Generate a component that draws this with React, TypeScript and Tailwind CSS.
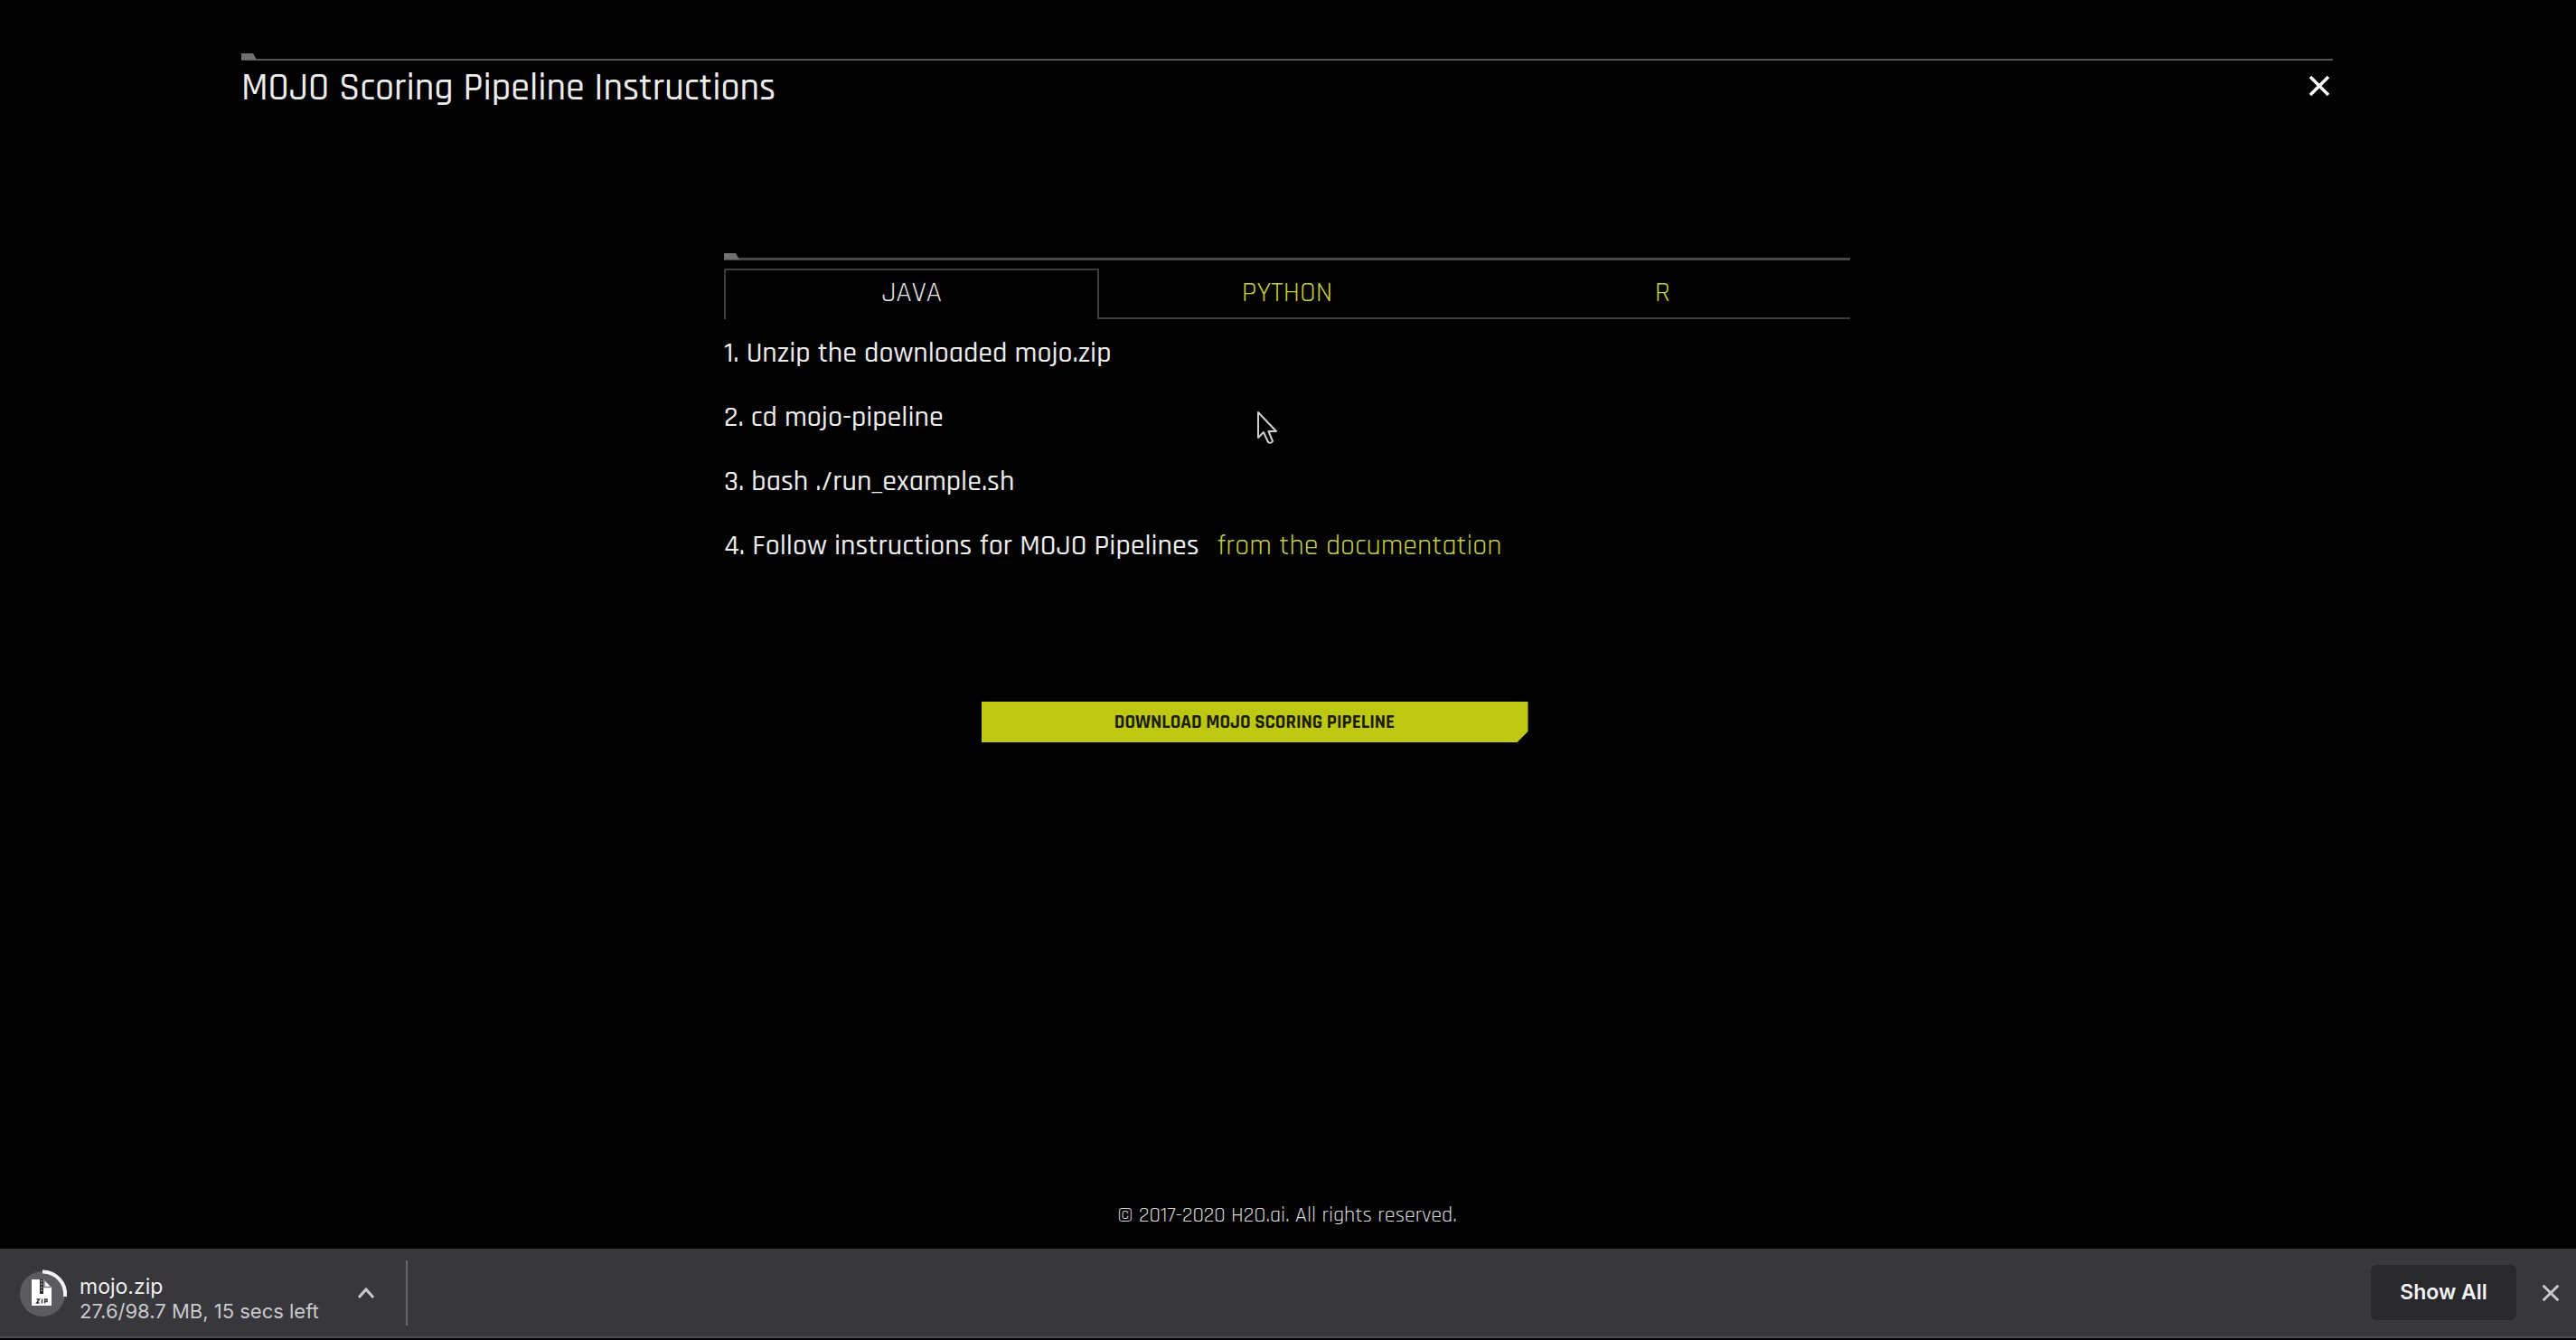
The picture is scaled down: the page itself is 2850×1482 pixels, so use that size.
import { useState } from "react";

const tabs = ["JAVA", "PYTHON", "R"];

const steps = [
  "1. Unzip the downloaded mojo.zip",
  "2. cd mojo-pipeline",
  "3. bash ./run_example.sh",
];

function Notch() {
  return (
    <svg viewBox="0 0 17 7" className="block h-[7px] w-[17px]" fill="#707072" aria-hidden="true">
      <path d="M0 0h13l4 7H0z" />
    </svg>
  );
}

function Cross({ className }: { className: string }) {
  return (
    <svg viewBox="0 0 24 24" className={className} fill="none" stroke="currentColor" strokeWidth="3.500" aria-hidden="true">
      <path d="M2 2l20 20M22 2L2 22" />
    </svg>
  );
}

function ZipProgress() {
  return (
    <svg viewBox="0 0 54 54" className="size-[54px] shrink-0" aria-hidden="true">
      <circle cx="25" cy="28" r="25" fill="#5c5b60" />
      <path d="M25 3.500A25 25 0 0 1 50 31" fill="none" stroke="#f4f4f6" strokeWidth="4" />
      <path d="M13 12h13l9 9v20H13z" fill="#fff" />
      <path d="M27 13v7.500h7" fill="none" stroke="#77767b" strokeWidth="1.500" />
      <path d="M22 12h4v16h-4z" fill="#2b2a2e" />
      <path d="M24 13v12" stroke="#bbb" strokeWidth="1.500" strokeDasharray="1.500 2" />
      <path d="M18.500 34h3l-3 4h3M24.500 33.500v5M27.500 38.500v-4.500h2.500v2.500h-2.500" fill="none" stroke="#333" strokeWidth="1.300" />
    </svg>
  );
}

function Pointer() {
  return (
    <svg viewBox="0 0 24 38" className="h-[38px] w-6" fill="#000" stroke="#cfcfcf" strokeWidth="2" strokeLinejoin="round" aria-hidden="true">
      <path d="M2 2v28l6-6 5 11q3 2 5-1l-4.500-11H22z" />
    </svg>
  );
}

export default function App() {
  const [active, setActive] = useState("JAVA");
  return (
    <div className="flex min-h-screen flex-col bg-black font-['Rajdhani','Roboto',sans-serif] text-[#ededed]">
      <main className="flex flex-1 flex-col pr-[269px] pl-[267px] pt-[59px]">
        <header>
          <Notch />
          <div className="-mt-px h-0.5 bg-[#565657]" />
          <div className="flex items-start justify-between pt-1">
            <h1 className="text-[42px] leading-[54px] font-medium">MOJO Scoring Pipeline Instructions</h1>
            <button type="button" aria-label="Close" className="mt-3 mr-[3px] text-white">
              <Cross className="size-6" />
            </button>
          </div>
        </header>

        <section className="relative mx-auto mt-[155px] w-full max-w-[1246px]">
          <Notch />
          <div className="-mt-0.5 h-[3px] bg-[#474748]" />
          <div role="tablist" className="mt-[9px] grid grid-cols-3">
            {tabs.map((tab) => (
              <button
                key={tab}
                type="button"
                role="tab"
                aria-selected={tab === active}
                onClick={() => setActive(tab)}
                className={
                  tab === active
                    ? "h-14 border-2 border-b-0 border-[#3d3d3f] pb-1 text-[32px] leading-[50px] text-[#e4e4e4]"
                    : "h-14 border-b-2 border-[#3d3d3f] pt-0.5 pb-1 text-[32px] leading-[50px] text-[#c3cd3c]"
                }
              >
                {tab}
              </button>
            ))}
          </div>
          <ol className="mt-0.5 text-[32px] leading-[71px] font-medium">
            {steps.map((step) => (
              <li key={step}>{step}</li>
            ))}
            <li>
              4. Follow instructions for MOJO Pipelines
              <a href="#documentation" className="ml-5 font-normal text-[#c3cd3c]">from the documentation</a>
            </li>
          </ol>
          <div className="absolute top-[174px] left-[589px]">
            <Pointer />
          </div>
        </section>

        <button
          type="button"
          className="mt-[137px] mr-[72px] h-[45px] w-[605px] self-center bg-[#bec813] text-[21px] leading-[45px] font-bold text-[#1c1d0e] [clip-path:polygon(0_0,100%_0,100%_calc(100%-12px),calc(100%-12px)_100%,0_100%)]"
        >
          DOWNLOAD MOJO SCORING PIPELINE
        </button>

        <footer className="mt-auto pb-[21px] text-center text-2xl text-[#d6d6d6]">
          © 2017-2020 H2O.ai. All rights reserved.
        </footer>
      </main>

      <aside className="border-b-2 border-black bg-[#38373c] font-['Inter','Roboto',sans-serif]" aria-label="Downloads">
        <div className="flex h-[99px] items-center border-b-2 border-[#4c4b51] pr-[18px] pl-[22px]">
          <ZipProgress />
          <div className="ml-3 w-[308px] pt-3.5">
            <p className="text-[23px] leading-[27px] text-[#f0f0f2]">mojo.zip</p>
            <p className="text-[22px] leading-[27px] text-[#c9c9cd]">27.6/98.7 MB, 15 secs left</p>
          </div>
          <button type="button" aria-label="Download options" className="text-[#c9c9cd]">
            <svg viewBox="0 0 18 12" className="h-3 w-[18px]" fill="none" stroke="currentColor" strokeWidth="3" aria-hidden="true">
              <path d="M1 11l8-9 8 9" />
            </svg>
          </button>
          <div className="ml-[35px] h-[72px] w-0.5 bg-[#69686d]" />
          <button type="button" className="ml-auto h-[61px] w-[161px] rounded-md bg-[#29282d] text-[23px] font-semibold text-[#f2f2f5]">
            Show All
          </button>
          <button type="button" aria-label="Close downloads bar" className="ml-7 text-[#c9c9cd]">
            <Cross className="size-5" />
          </button>
        </div>
      </aside>
    </div>
  );
}
